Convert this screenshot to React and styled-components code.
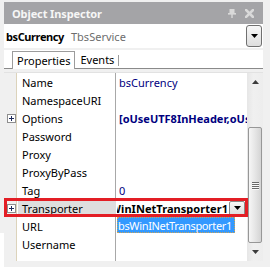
import React from 'react';
import styled, { createGlobalStyle } from 'styled-components';

const Global = createGlobalStyle`
  html, body { margin: 0; padding: 0; }
  body {
    width: 270px; height: 267px; overflow: hidden; background: #f0f0f0;
    font-family: "Noto Sans", "DejaVu Sans", sans-serif;
  }
`;

const Frame = styled.div`
  position: relative;
  width: 270px;
  height: 267px;
  box-sizing: border-box;
  padding: 2px 7px 0 4px;
  background: linear-gradient(#f0f0f0 0 233px, #ffffff 233px) left top / 4px 100% no-repeat, #f0f0f0;
`;

const Main = styled.div`
  display: flex;
  flex-direction: column;
  width: 259px;
`;

const TitleBar = styled.div`
  height: 22px;
  display: flex;
  align-items: center;
  padding: 0 9px 0 8px;
  background: #a4a4a7;
  color: #f6f6f6;
  font-size: 11px;
  font-weight: 700;
  letter-spacing: -0.1px;
`;

const TitleIcons = styled.div`
  margin-left: auto;
  display: flex;
  align-items: center;
  gap: 9px;
`;

const ComponentRow = styled.div`
  height: 24px;
  display: flex;
  align-items: center;
  padding: 0 1px 0 2px;
  background: #fff;
  font-size: 11px;
`;

const CompName = styled.span`
  font-weight: 700;
  color: #000;
  letter-spacing: -0.4px;
`;

const CompType = styled.span`
  margin-left: 7px;
  color: #6d6d6d;
`;

const ComboButton = styled.div`
  margin-left: auto;
  width: 16px;
  height: 22px;
  box-sizing: border-box;
  border: 1px solid #707070;
  border-radius: 3px;
  background: linear-gradient(#f7f7f7, #dedede);
  display: flex;
  align-items: center;
  justify-content: center;
`;

const TabStrip = styled.div`
  margin-top: 2px;
  height: 18px;
  display: flex;
  align-items: flex-end;
  padding-left: 8px;
  background: #fff;
  border-bottom: 1px solid #8a8a8a;
  font-size: 11px;
`;

const Tab = styled.div`
  position: relative;
  height: ${p => (p.$active ? 18 : 17)}px;
  box-sizing: border-box;
  display: flex;
  align-items: center;
  padding: 0 ${p => (p.$active ? 4 : 5)}px;
  border: ${p => (p.$active ? '1px solid #9c9c9c' : 'none')};
  border-bottom: none;
  margin-bottom: ${p => (p.$active ? -1 : 0)}px;
  background: #fff;
  color: #000;
  &::after {
    content: '';
    display: ${p => (p.$active ? 'none' : 'block')};
    position: absolute;
    right: 0;
    top: 4px;
    bottom: 2px;
    width: 1px;
    background: #9c9c9c;
  }
`;

const GridArea = styled.div`
  margin-top: 3px;
  display: flex;
  height: 188px;
  border-top: 1px solid #e2e2e2;
  background: #fff;
`;

const PropList = styled.div`
  position: relative;
  flex: 1;
  min-width: 0;
  background:
    linear-gradient(to right, #f0f0f0 0 12px, #dcd3bb 12px 13px, transparent 13px 111px, #a8a8a8 111px 112px, transparent 112px),
    #fff;
  font-size: 11px;
`;

const Row = styled.div`
  height: 18px;
  display: grid;
  grid-template-columns: 13px 98px minmax(0, 1fr);
  column-gap: 1px;
  align-items: stretch;
`;

const Gutter = styled.div`
  display: flex;
  align-items: center;
  padding-left: 3px;
`;

const ExpandBox = styled.div`
  width: 9px;
  height: 9px;
  box-sizing: border-box;
  border: 1px solid #8e8e8e;
  background: #fff;
  position: relative;
  &::before, &::after {
    content: '';
    position: absolute;
    background: #1d2a5a;
  }
  &::before { left: 1px; right: 1px; top: 3px; height: 1px; }
  &::after { top: 1px; bottom: 1px; left: 3px; width: 1px; }
`;

const NameCell = styled.div`
  display: flex;
  align-items: center;
  padding-left: 4px;
  white-space: nowrap;
  overflow: hidden;
  color: #000;
  background: ${p => (p.$selected ? '#dedede' : 'transparent')};
`;

const ValueCell = styled.div`
  display: flex;
  align-items: center;
  padding-left: 2px;
  white-space: nowrap;
  overflow: hidden;
  color: ${p => (p.$plain ? '#000' : '#000080')};
  font-weight: ${p => (p.$bold ? 700 : 400)};
`;

const EditValue = styled.div`
  display: flex;
  align-items: center;
  height: 100%;
  min-width: 0;
`;

const EditText = styled.div`
  flex: 1;
  min-width: 0;
  display: flex;
  justify-content: flex-end;
  overflow: hidden;
  white-space: nowrap;
  font-weight: 700;
  letter-spacing: 0.05px;
  color: #000;
  padding-right: 1px;
`;

const EditButton = styled.div`
  flex: none;
  width: 16px;
  height: 15px;
  margin-right: 2px;
  box-sizing: border-box;
  border: 1px solid #8a8a8a;
  border-radius: 2px;
  background: linear-gradient(#f8f8f8, #dcdcdc);
  display: flex;
  align-items: center;
  justify-content: center;
`;

const DropItem = styled.div`
  position: absolute;
  left: 113px;
  top: 144px;
  width: 118px;
  height: 16px;
  box-sizing: border-box;
  display: flex;
  align-items: center;
  padding-left: 1px;
  background: #3399ff;
  color: #fff;
  font-size: 11px;
  letter-spacing: -0.35px;
  outline: 1px dotted #c9a35a;
  outline-offset: -1px;
  white-space: nowrap;
  overflow: hidden;
`;

const ScrollBar = styled.div`
  width: 16px;
  flex: none;
  display: flex;
  flex-direction: column;
  background: linear-gradient(to right, #e6e6e6, #f0f0f0 40%, #ededed);
`;

const ScrollArrow = styled.div`
  height: ${p => p.$h}px;
  flex: none;
  display: flex;
  align-items: center;
  justify-content: center;
`;

const TrackGap = styled.div`
  flex: ${p => (p.$fixed ? 'none' : 1)};
  height: ${p => (p.$fixed ? `${p.$fixed}px` : 'auto')};
`;

const Thumb = styled.div`
  margin: 0 1px;
  height: 116px;
  flex: none;
  box-sizing: border-box;
  border: 1px solid #979797;
  border-radius: 2px;
  background: linear-gradient(to right, #f6f6f6, #e6e6e6 50%, #d4d4d4);
  display: flex;
  flex-direction: column;
  align-items: center;
  justify-content: center;
  gap: 1px;
`;

const GripLine = styled.div`
  width: 7px;
  height: 1px;
  background: #6a6a6a;
  box-shadow: 0 1px 0 #fafafa;
`;

const Highlight = styled.div`
  position: absolute;
  left: 4px;
  top: 198px;
  width: 244px;
  height: 19px;
  box-sizing: border-box;
  border: 3px solid #e31e25;
  pointer-events: none;
`;

const Tri = ({ up, w = 7, h = 4, color = '#000' }) => (
  <svg width={w} height={h} viewBox={`0 0 ${w} ${h}`}>
    {up ? (
      <polygon points={`0,${h} ${w},${h} ${w / 2},0`} fill={color} />
    ) : (
      <polygon points={`0,0 ${w},0 ${w / 2},${h}`} fill={color} />
    )}
  </svg>
);

const PinIcon = () => (
  <svg width="8" height="9" viewBox="0 0 8 9">
    <rect x="0" y="4" width="8" height="1.6" fill="#d9d9d9" />
    <rect x="1.5" y="0" width="5" height="4.5" fill="#d9d9d9" />
    <rect x="3.3" y="5" width="1.4" height="4" fill="#d9d9d9" />
  </svg>
);

const CloseIcon = () => (
  <svg width="9" height="9" viewBox="0 0 9 9">
    <path d="M1 1 L8 8 M8 1 L1 8" stroke="#d9d9d9" strokeWidth="2.6" strokeLinecap="square" />
  </svg>
);

const props = [
  { name: 'Name', value: 'bsCurrency' },
  { name: 'NamespaceURI', value: '' },
  { name: 'Options', value: '[oUseUTF8InHeader,oUseUTF8InHeader]', bold: true, expand: true },
  { name: 'Password', value: '' },
  { name: 'Proxy', value: '' },
  { name: 'ProxyByPass', value: '' },
  { name: 'Tag', value: '0' },
  { name: 'Transporter', value: 'bsWinINetTransporter1', expand: true, editing: true },
  { name: 'URL', value: '' },
  { name: 'Username', value: '' },
];

export default function App() {
  return (
    <>
      <Global />
      <Frame>
        <Main>
          <TitleBar>
            Object Inspector
            <TitleIcons>
              <PinIcon />
              <CloseIcon />
            </TitleIcons>
          </TitleBar>
          <ComponentRow>
            <CompName>bsCurrency</CompName>
            <CompType>TbsService</CompType>
            <ComboButton>
              <Tri />
            </ComboButton>
          </ComponentRow>
          <TabStrip>
            <Tab $active>Properties</Tab>
            <Tab>Events</Tab>
          </TabStrip>
          <GridArea>
            <PropList>
              {props.map(p => (
                <Row key={p.name}>
                  <Gutter>{p.expand && <ExpandBox />}</Gutter>
                  <NameCell $selected={p.editing}>{p.name}</NameCell>
                  {p.editing ? (
                    <EditValue>
                      <EditText>
                        <span>{p.value}</span>
                      </EditText>
                      <EditButton>
                        <Tri />
                      </EditButton>
                    </EditValue>
                  ) : (
                    <ValueCell $bold={p.bold}>{p.value}</ValueCell>
                  )}
                </Row>
              ))}
              <DropItem>bsWinINetTransporter1</DropItem>
            </PropList>
            <ScrollBar>
              <ScrollArrow $h={18}>
                <Tri up w={7} h={4} color="#3c3c3c" />
              </ScrollArrow>
              <TrackGap $fixed={36} />
              <Thumb>
                <GripLine />
                <GripLine />
                <GripLine />
                <GripLine />
              </Thumb>
              <TrackGap />
              <ScrollArrow $h={18}>
                <Tri w={7} h={4} color="#3c3c3c" />
              </ScrollArrow>
            </ScrollBar>
          </GridArea>
        </Main>
        <Highlight />
      </Frame>
    </>
  );
}
